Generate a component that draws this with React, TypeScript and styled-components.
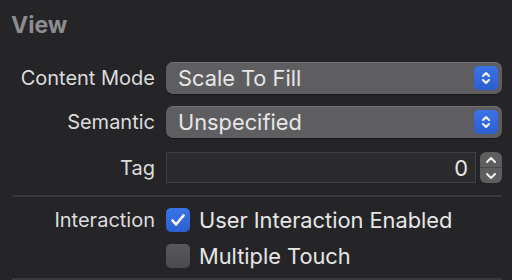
import React from "react";
import styled, { createGlobalStyle } from "styled-components";

const Global = createGlobalStyle`
  html, body { margin: 0; padding: 0; background: #252528; }
  body { font-family: Inter, "Noto Sans", sans-serif; -webkit-font-smoothing: antialiased; }
`;

const Panel = styled.div`
  width: 512px;
  height: 280px;
  box-sizing: border-box;
  background: #252528;
  padding: 8px 10px 0 11px;
  overflow: hidden;
`;

const Title = styled.div`
  font-size: 23px;
  font-weight: 700;
  color: #8d8d8f;
  line-height: 34px;
  height: 34px;
  margin-bottom: 20px;
`;

const Grid = styled.div`
  display: grid;
  grid-template-columns: 144px 1fr;
  column-gap: 11px;
  row-gap: 12px;
  align-items: center;
`;

const Label = styled.div<{ $top?: boolean; $shift?: number }>`
  font-size: 20px;
  color: #dcdcdd;
  text-align: right;
  white-space: nowrap;
  line-height: 24px;
  align-self: ${(p) => (p.$top ? "start" : "center")};
  margin-top: ${(p) => p.$shift ?? 0}px;
`;

const Popup = styled.div`
  height: 32px;
  box-sizing: border-box;
  border-radius: 7px;
  background: #5e5e60;
  box-shadow: inset 0 1px 0 rgba(255, 255, 255, 0.12), 0 1px 1px rgba(0, 0, 0, 0.35);
  display: flex;
  align-items: center;
  padding: 0 4px 0 12px;
`;

const ControlText = styled.span`
  font-size: 21.8px;
  color: #e6e6e7;
  line-height: 24px;
  white-space: nowrap;
`;

const PopupText = styled(ControlText)`
  flex: 1;
`;

const BlueBtn = styled.div`
  width: 24px;
  height: 24px;
  border-radius: 5px;
  background: linear-gradient(#3a74e6, #2c5fd0);
  display: flex;
  align-items: center;
  justify-content: center;
`;

const TagRow = styled.div`
  display: flex;
  align-items: center;
  gap: 4px;
  margin-top: 2px;
`;

const Field = styled.div`
  flex: 1;
  height: 31px;
  box-sizing: border-box;
  background: #2b2b2e;
  border: 1px solid #3f3f42;
  display: flex;
  align-items: center;
  justify-content: flex-end;
  padding-right: 7px;
`;

const Stepper = styled.div`
  width: 22px;
  height: 31px;
  border-radius: 6px;
  background: #5e5e60;
  display: flex;
  flex-direction: column;
  overflow: hidden;
`;

const StepHalf = styled.div<{ $top?: boolean }>`
  flex: 1;
  display: flex;
  align-items: center;
  justify-content: center;
  border-bottom: ${(p) => (p.$top ? "1px solid #48484a" : "none")};
`;

const Divider = styled.div`
  height: 2px;
  background: #39393c;
  margin-left: 1px;
`;

const Top = styled.div`
  padding-bottom: 12px;
`;

const Section = styled.div`
  padding: 11px 0 10px;
`;

const CheckList = styled.div`
  display: flex;
  flex-direction: column;
  gap: 12px;
`;

const CheckRow = styled.div`
  display: flex;
  align-items: center;
  gap: 9px;
`;

const Box = styled.div<{ $checked?: boolean }>`
  width: 24px;
  height: 24px;
  border-radius: 5px;
  box-sizing: border-box;
  background: ${(p) => (p.$checked ? "linear-gradient(#3a74e6, #2c5fd0)" : "linear-gradient(#59595c, #4b4b4e)")};
  display: flex;
  align-items: center;
  justify-content: center;
  flex-shrink: 0;
`;

const UpDown = () => (
  <svg width="12" height="16" viewBox="0 0 12 16" fill="none" stroke="#fff" strokeWidth="2" strokeLinecap="round" strokeLinejoin="round">
    <path d="M3 6 L6 3 L9 6" />
    <path d="M3 10 L6 13 L9 10" />
  </svg>
);

const Chevron = ({ up }: { up?: boolean }) => (
  <svg width="12" height="8" viewBox="0 0 12 8" fill="none" stroke="#f2f2f2" strokeWidth="2" strokeLinecap="round" strokeLinejoin="round">
    {up ? <path d="M2 6 L6 2 L10 6" /> : <path d="M2 2 L6 6 L10 2" />}
  </svg>
);

const Check = () => (
  <svg width="16" height="14" viewBox="0 0 16 14" fill="none" stroke="#fff" strokeWidth="2.6" strokeLinecap="round" strokeLinejoin="round">
    <path d="M2.5 7.5 L6 11.5 L13.5 2.5" />
  </svg>
);

export default function App() {
  return (
    <>
      <Global />
      <Panel>
        <Title>View</Title>
        <Top>
          <Grid>
            <Label>Content Mode</Label>
            <Popup>
              <PopupText>Scale To Fill</PopupText>
              <BlueBtn><UpDown /></BlueBtn>
            </Popup>
            <Label>Semantic</Label>
            <Popup>
              <PopupText>Unspecified</PopupText>
              <BlueBtn><UpDown /></BlueBtn>
            </Popup>
            <Label $shift={2}>Tag</Label>
            <TagRow>
              <Field><ControlText>0</ControlText></Field>
              <Stepper>
                <StepHalf $top><Chevron up /></StepHalf>
                <StepHalf><Chevron /></StepHalf>
              </Stepper>
            </TagRow>
          </Grid>
        </Top>
        <Divider />
        <Section>
          <Grid>
            <Label $top>Interaction</Label>
            <CheckList>
              <CheckRow>
                <Box $checked><Check /></Box>
                <ControlText>User Interaction Enabled</ControlText>
              </CheckRow>
              <CheckRow>
                <Box />
                <ControlText>Multiple Touch</ControlText>
              </CheckRow>
            </CheckList>
          </Grid>
        </Section>
        <Divider />
      </Panel>
    </>
  );
}
